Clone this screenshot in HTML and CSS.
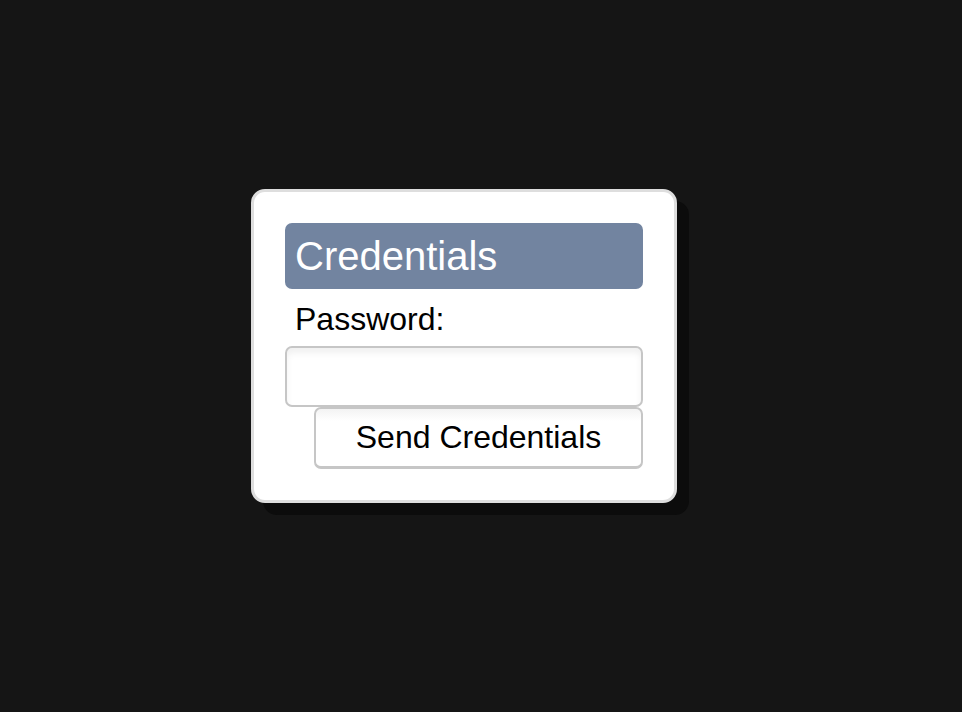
FILE: index.html
```html
<!DOCTYPE html>
<html lang="en">
<head>
    <meta charset="UTF-8">
    <meta name="viewport" content="width=device-width, initial-scale=1.0">
    <title>Credentials</title>
    <link rel="stylesheet" href="styles.css">
</head>
<body>
    <div class="dialog">
        <h1>Credentials</h1>
        <form id="credentialsForm">
            <label for="password">Password:</label>
            <input type="password" id="password" name="password">
            <button type="submit">Send Credentials</button>
        </form>
    </div>
</body>
</html>
```

FILE: styles.css
```css
body {
    font-family: "Liberation Sans", Arial, sans-serif;
    background-color: #151515;
    margin: 0;
    padding: 189px 0 0 251px;
    height: 100vh;
    box-sizing: border-box;
}

.dialog {
    width: 426px;
    background: #fff;
    border: 3px solid #dedede;
    border-radius: 14px;
    padding: 31px;
    box-sizing: border-box;
    box-shadow: 12px 12px 0 #0c0c0c;
}

h1 {
    margin: 0;
    height: 66px;
    padding: 0 10px;
    background-color: #7284a0;
    color: #fff;
    border-radius: 7px;
    font-size: 40px;
    font-weight: normal;
    line-height: 66px;
}

form {
    display: flex;
    flex-direction: column;
}

label {
    height: 57px;
    padding-left: 10px;
    font-size: 32px;
    line-height: 60px;
    color: #000;
}

input, button {
    font-family: inherit;
    border: 2px solid #c6c6c6;
    border-radius: 7px;
    background: #fff;
    box-sizing: border-box;
    flex-shrink: 0;
}

input {
    height: 61px;
    box-shadow: inset 0 5px 6px rgba(0,0,0,0.06);
    outline: none;
}

button {
    align-self: flex-end;
    width: 329px;
    height: 62px;
    padding: 0;
    border-bottom-width: 3px;
    font-size: 32px;
    color: #000;
    background: linear-gradient(#f3f3f3, #fff 12px);
    cursor: pointer;
}
```
